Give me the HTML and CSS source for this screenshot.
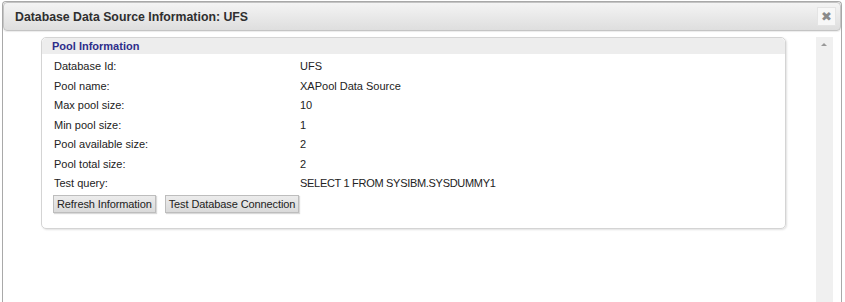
FILE: index.html
```html
<!DOCTYPE html>
<html>
<head>
<meta charset="utf-8">
<link rel="stylesheet" href="styles.css">
</head>
<body>
<div class="dialog">
  <div class="titlebar">
    <span class="title">Database Data Source Information: UFS</span>
    <span class="close">✖</span>
  </div>
  <div class="content">
    <div class="main">
      <div class="panel">
        <div class="panel-head">Pool Information</div>
        <div class="rows">
          <div class="row"><span class="label">Database Id:</span><span>UFS</span></div>
          <div class="row"><span class="label">Pool name:</span><span>XAPool Data Source</span></div>
          <div class="row"><span class="label">Max pool size:</span><span>10</span></div>
          <div class="row"><span class="label">Min pool size:</span><span>1</span></div>
          <div class="row"><span class="label">Pool available size:</span><span>2</span></div>
          <div class="row"><span class="label">Pool total size:</span><span>2</span></div>
          <div class="row"><span class="label">Test query:</span><span class="caps">SELECT 1 FROM SYSIBM.SYSDUMMY1</span></div>
        </div>
        <div class="buttons">
          <button class="btn">Refresh Information</button>
          <button class="btn">Test Database Connection</button>
        </div>
      </div>
    </div>
    <div class="scrollbar"><span class="arrow"></span></div>
  </div>
</div>
</body>
</html>
```
FILE: styles.css
```css
html, body {
  margin: 0;
  padding: 0;
  background: #fff;
  height: 302px;
  overflow: hidden;
}
body {
  font-family: "Liberation Sans", Arial, sans-serif;
  font-size: 11px;
  color: #222;
}
.dialog {
  margin: 1px 3px 0 2px;
  height: 310px;
  border: 1px solid #a9a9a9;
  border-bottom: none;
  border-radius: 4px 4px 0 0;
  box-sizing: border-box;
  display: flex;
  flex-direction: column;
}
.titlebar {
  height: 29px;
  box-sizing: border-box;
  border: 1px solid #c4c4c4;
  border-radius: 4px;
  background: linear-gradient(#f4f4f4, #dedede);
  display: flex;
  align-items: center;
  justify-content: space-between;
  padding: 0 4px 0 11px;
  box-shadow: 0 1px 1px rgba(0,0,0,0.08);
}
.title {
  font-weight: bold;
  font-size: 12.3px;
  color: #2f2f2f;
}
.close {
  width: 19px;
  height: 19px;
  background: #f7f7f7;
  border: 1px solid #e4e4e4;
  color: #8a8a8a;
  font-size: 13px;
  display: flex;
  align-items: center;
  justify-content: center;
  box-sizing: border-box;
}
.content {
  flex: 1;
  display: flex;
  padding-top: 6px;
}
.main {
  flex: 1;
  padding-left: 38px;
}
.panel {
  width: 745px;
  height: 192px;
  box-sizing: border-box;
  border: 1px solid #d4d4d4;
  border-radius: 5px;
  box-shadow: 1px 1px 2px rgba(0,0,0,0.12);
}
.panel-head {
  height: 16px;
  background: #ededed;
  border-radius: 5px 5px 0 0;
  color: #2e2e8a;
  font-weight: bold;
  font-size: 11px;
  line-height: 16px;
  padding-left: 10px;
}
.rows {
  padding: 3px 0 0 12px;
}
.row {
  display: grid;
  grid-template-columns: 246px auto;
  height: 19.5px;
  line-height: 19.5px;
}
.caps {
  letter-spacing: -0.3px;
}
.buttons {
  display: flex;
  gap: 9px;
  padding: 1px 0 0 11px;
}
.btn {
  font-family: "Liberation Sans", Arial, sans-serif;
  font-size: 11px;
  letter-spacing: -0.1px;
  color: #222;
  height: 18px;
  padding: 0 3px;
  background: linear-gradient(#ececec, #dadada);
  border: 1px solid #bdbdbd;
  border-radius: 0;
  box-shadow: 1px 1px 1px rgba(0,0,0,0.15);
}
.scrollbar {
  width: 17px;
  margin-right: 8px;
  background: #f0f0f0;
  position: relative;
}
.arrow {
  position: absolute;
  left: 5px;
  top: 6px;
  width: 0;
  height: 0;
  border-left: 3px solid transparent;
  border-right: 3px solid transparent;
  border-bottom: 3px solid #999;
}
```
